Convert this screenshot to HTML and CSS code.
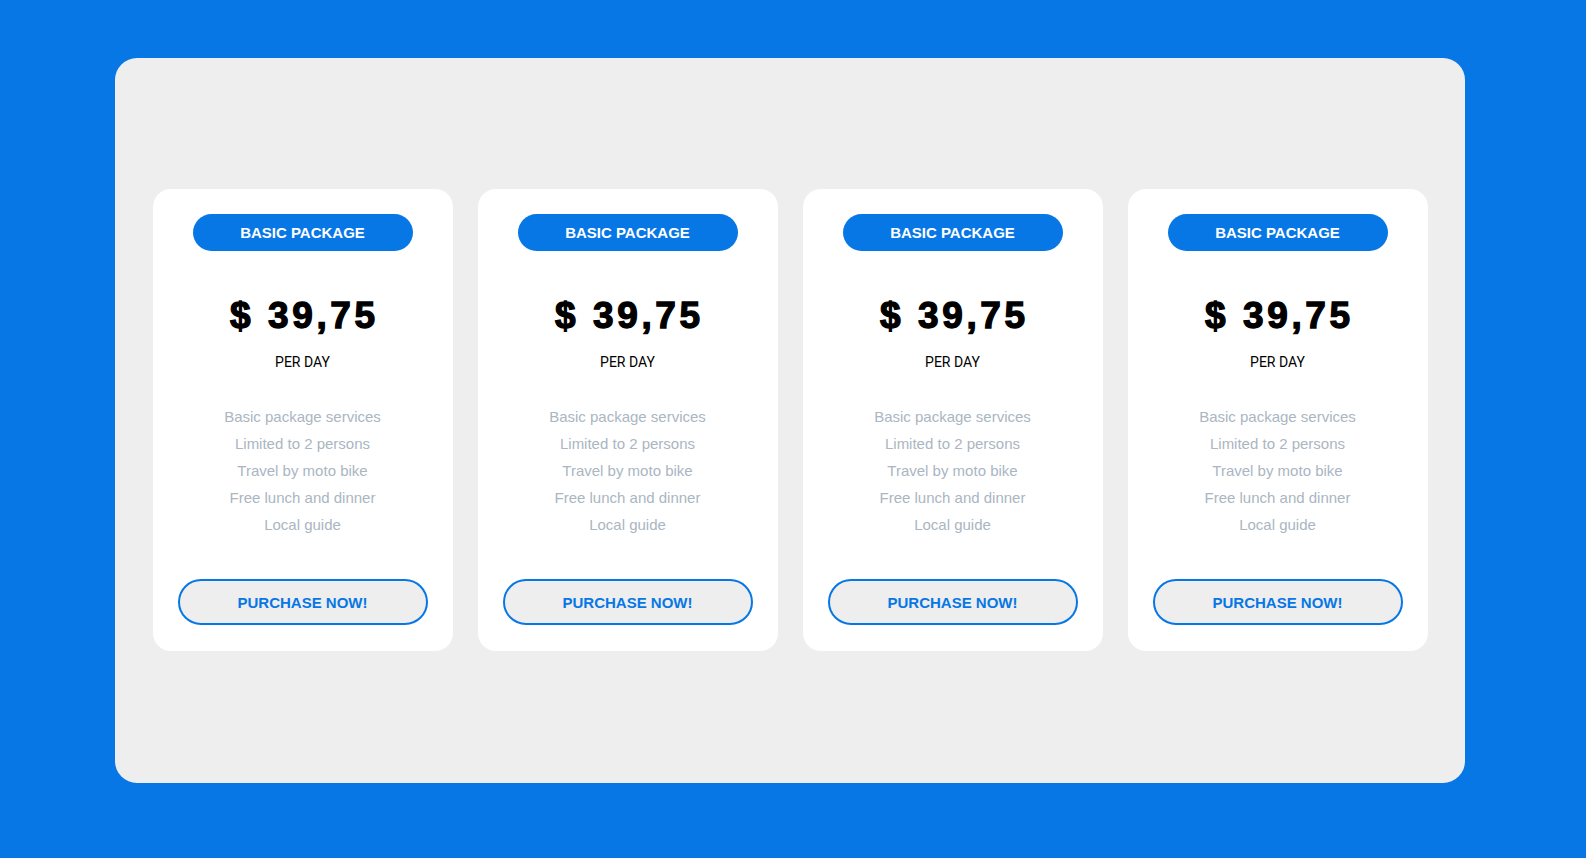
FILE: index.html
```html
<!DOCTYPE html>
<html lang="en">
<head>
<meta charset="utf-8">
<title>Pricing</title>
<link rel="stylesheet" href="styles.css">
</head>
<body>
<main class="panel">
  <section class="card">
    <div class="badge">BASIC PACKAGE</div>
    <div class="price">$ 39,75</div>
    <div class="period">PER DAY</div>
    <ul class="features">
      <li>Basic package services</li>
      <li>Limited to 2 persons</li>
      <li>Travel by moto bike</li>
      <li>Free lunch and dinner</li>
      <li>Local guide</li>
    </ul>
    <button class="buy">PURCHASE NOW!</button>
  </section>
  <section class="card">
    <div class="badge">BASIC PACKAGE</div>
    <div class="price">$ 39,75</div>
    <div class="period">PER DAY</div>
    <ul class="features">
      <li>Basic package services</li>
      <li>Limited to 2 persons</li>
      <li>Travel by moto bike</li>
      <li>Free lunch and dinner</li>
      <li>Local guide</li>
    </ul>
    <button class="buy">PURCHASE NOW!</button>
  </section>
  <section class="card">
    <div class="badge">BASIC PACKAGE</div>
    <div class="price">$ 39,75</div>
    <div class="period">PER DAY</div>
    <ul class="features">
      <li>Basic package services</li>
      <li>Limited to 2 persons</li>
      <li>Travel by moto bike</li>
      <li>Free lunch and dinner</li>
      <li>Local guide</li>
    </ul>
    <button class="buy">PURCHASE NOW!</button>
  </section>
  <section class="card">
    <div class="badge">BASIC PACKAGE</div>
    <div class="price">$ 39,75</div>
    <div class="period">PER DAY</div>
    <ul class="features">
      <li>Basic package services</li>
      <li>Limited to 2 persons</li>
      <li>Travel by moto bike</li>
      <li>Free lunch and dinner</li>
      <li>Local guide</li>
    </ul>
    <button class="buy">PURCHASE NOW!</button>
  </section>
</main>
</body>
</html>
```

FILE: styles.css
```css
html, body {
  margin: 0;
  padding: 0;
}

body {
  background: #0777e6;
  font-family: "Liberation Sans", Arial, sans-serif;
  min-height: 858px;
  padding-top: 58px;
  box-sizing: border-box;
}

.panel {
  margin-left: 115px;
  width: 1350px;
  height: 725px;
  box-sizing: border-box;
  padding-top: 131px;
  background: #eeeeee;
  border-radius: 22px;
  display: flex;
  align-items: flex-start;
  justify-content: center;
  gap: 25px;
}

.card {
  width: 300px;
  height: 462px;
  box-sizing: border-box;
  background: #ffffff;
  border-radius: 18px;
  padding: 25px 25px 26px;
  display: flex;
  flex-direction: column;
  align-items: center;
}

.badge {
  width: 220px;
  height: 37px;
  line-height: 37px;
  border-radius: 19px;
  background: #0777e6;
  color: #ffffff;
  font-weight: bold;
  font-size: 15px;
  text-align: center;
}

.price {
  margin-top: 46px;
  font-size: 37px;
  line-height: 37px;
  font-weight: bold;
  color: #000;
  letter-spacing: 3.6px;
  -webkit-text-stroke: 1.3px #000;
  padding-left: 3.6px;
}

.period {
  margin-top: 20px;
  font-family: Roboto, "Liberation Sans", sans-serif;
  font-size: 14px;
  line-height: 16px;
  color: #000;
}

.features {
  list-style: none;
  margin: 33px 0 0;
  padding: 0;
  text-align: center;
  font-size: 15px;
  line-height: 27px;
  color: #aab6c2;
}

.buy {
  margin-top: auto;
  width: 250px;
  height: 46px;
  box-sizing: border-box;
  border: 2px solid #0777e6;
  border-radius: 23px;
  background: #eeeeee;
  color: #0777e6;
  font-family: "Liberation Sans", Arial, sans-serif;
  font-weight: bold;
  font-size: 15px;
  padding: 0;
  cursor: pointer;
}
```
